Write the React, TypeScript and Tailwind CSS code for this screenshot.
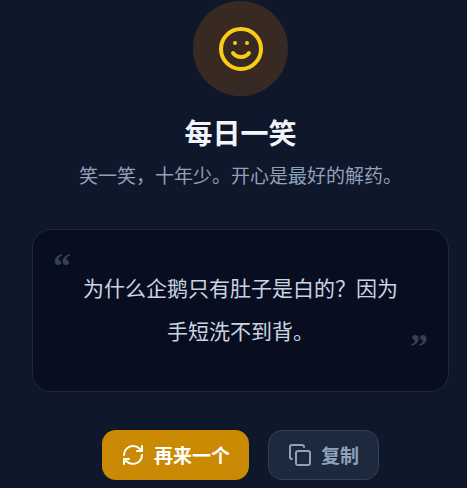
import { useState } from "react";
import { Copy, RefreshCw, Smile } from "lucide-react";

const jokes = [
  "为什么企鹅只有肚子是白的？因为手短洗不到背。",
  "为什么数学书总是很忧郁？因为它有太多的问题。",
];

export default function App() {
  const [index, setIndex] = useState(0);
  const joke = jokes[index];

  return (
    <main className="flex min-h-screen flex-col items-center bg-[#0f172a] pt-px pr-[18px] pb-2 pl-8 font-['Noto_Sans_CJK_SC',sans-serif]">
      <div className="flex size-[95px] items-center justify-center rounded-full bg-[#382923] text-[#facc15]">
        <Smile size={48} aria-hidden="true" />
      </div>
      <h1 className="mt-[17px] text-[28px] leading-[38px] font-bold text-slate-100">每日一笑</h1>
      <p className="mt-[10px] text-[19px] leading-7 text-slate-400">笑一笑，十年少。开心是最好的解药。</p>

      <blockquote className="relative mt-10 w-full rounded-[19px] border border-slate-800 bg-[#080e20] px-12 pt-9 pb-[39px] text-center">
        <span aria-hidden="true" className="absolute top-[18px] left-5 font-['Liberation_Serif',serif] text-[36px] leading-9 font-bold text-slate-700">
          “
        </span>
        <p className="text-[21px] leading-[43px] text-slate-300">{joke}</p>
        <span aria-hidden="true" className="absolute right-5 bottom-[26px] font-['Liberation_Serif',serif] text-[36px] leading-9 font-bold text-slate-700">
          ”
        </span>
      </blockquote>

      <div className="mt-[38px] flex gap-[19px] text-[19px] leading-7 font-bold">
        <button
          type="button"
          onClick={() => setIndex((index + 1) % jokes.length)}
          className="flex h-[50px] items-center gap-[9px] rounded-[14px] bg-[#ca8a04] px-[19px] text-white"
        >
          <RefreshCw size={24} aria-hidden="true" />
          再来一个
        </button>
        <button
          type="button"
          onClick={() => navigator.clipboard?.writeText(joke)}
          className="flex h-[50px] items-center gap-[9px] rounded-[14px] border border-slate-700 bg-slate-800 px-[19px] text-slate-400"
        >
          <Copy size={24} aria-hidden="true" />
          复制
        </button>
      </div>
    </main>
  );
}
